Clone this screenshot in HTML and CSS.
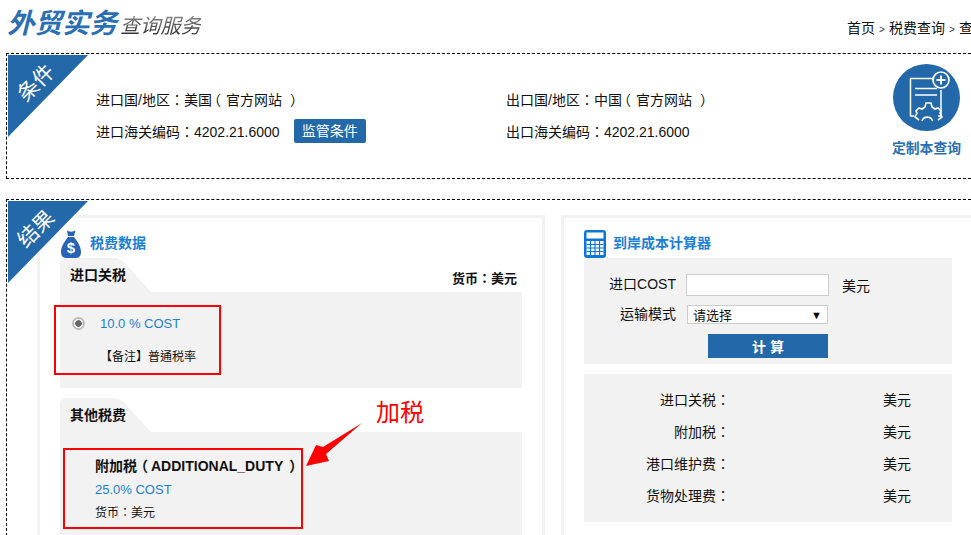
FILE: index.html
```html
<!DOCTYPE html>
<html>
<head>
<meta charset="utf-8">
<title>外贸实务查询服务</title>
<link rel="stylesheet" href="styles.css">
</head>
<body>
<div class="page">
  <header class="top">
    <div class="brand"><span class="brand-main">外贸实务</span><span class="brand-sub">查询服务</span></div>
    <div class="crumbs">首页<i> &gt; </i>税费查询<i> &gt; </i>查询结果</div>
  </header>

  <section class="panel panel-cond">
    <div class="ribbon"><span>条件</span></div>
    <div class="cond-col cond-col-a">
      <p class="cond-row">进口国/地区：美国<span class="po">（</span>官方网站<span class="pc">）</span></p>
      <p class="cond-row">进口海关编码：4202.21.6000<a class="btn-small">监管条件</a></p>
    </div>
    <div class="cond-col cond-col-b">
      <p class="cond-row">出口国/地区：中国<span class="po">（</span>官方网站<span class="pc">）</span></p>
      <p class="cond-row">出口海关编码：4202.21.6000</p>
    </div>
    <div class="custom">
      <svg class="custom-icon" viewBox="0 0 67 67" aria-hidden="true">
        <circle cx="33.500" cy="33.500" r="33.500" fill="#2368a8"/>
        <path d="M41 14.500H17.500V52H21" fill="none" stroke="#fff" stroke-width="1.500"/>
        <path d="M48 26V52H45" fill="none" stroke="#fff" stroke-width="1.500"/>
        <path d="M22 24.500H44M22 31H44" stroke="#fff" stroke-width="1.500"/>
        <circle cx="48" cy="16" r="8" fill="#2368a8" stroke="#fff" stroke-width="1.700"/>
        <path d="M43.500 16H52.500M48 11.500V20.500" stroke="#fff" stroke-width="1.800"/>
        <path d="M26 56 l-4 -3 l2 -4 l-1 -2 l3 -3 l3 1 l3 -2 l1 -4 h5 l1 4 l3 2 l3 -1 l3 3 l-1 2 l2 4 l-4 3" fill="none" stroke="#fff" stroke-width="1.600"/>
        <path d="M29 57a5.500 5.500 0 0 1 10.500 0" fill="none" stroke="#fff" stroke-width="1.600"/>
      </svg>
      <div class="custom-text">定制本查询</div>
    </div>
  </section>

  <section class="panel panel-result">
    <div class="ribbon"><span>结果</span></div>
    <div class="card card-left">
      <h3 class="card-title">
        <svg class="icon-bag" viewBox="0 0 20 28" aria-hidden="true">
          <path d="M6 0.500C8 2 12 2 14.500 0.500L13 6H7Z" fill="#2a62b4"/>
          <path d="M7 7H13C16 11 20 16 20 22C20 26 18 28 15 28H5C2 28 0 26 0 22C0 16 4 11 7 7Z" fill="#2a62b4"/>
          <text x="10" y="23" class="bag-dollar">$</text>
        </svg>
        <span>税费数据</span>
      </h3>
      <div class="tab-head">
        <div class="tab">进口关税</div>
        <div class="tab-note">货币：美元</div>
      </div>
      <div class="tab-body tab-body-a">
        <div class="rate-box">
          <div class="rate-line"><span class="radio"></span><span class="rate">10.0 % COST</span></div>
          <div class="note">【备注】普通税率</div>
        </div>
      </div>
      <div class="tab-head tab-head-b">
        <div class="tab">其他税费</div>
      </div>
      <div class="tab-body tab-body-b">
        <div class="duty-box">
          <div class="duty-name">附加税<span class="duty-po">（</span>ADDITIONAL_DUTY<span class="duty-pc">）</span></div>
          <div class="duty-rate">25.0% COST</div>
          <div class="duty-cur">货币：美元</div>
        </div>
      </div>
      <div class="callout">加税</div>
      <svg class="arrow" viewBox="0 0 60 46" aria-hidden="true">
        <path d="M56 1L20 32L23 39L0 44L10 23L17 25Z" fill="#f00"/>
      </svg>
    </div>

    <div class="card card-right">
      <h3 class="card-title">
        <svg class="icon-calc" viewBox="0 0 22 28" aria-hidden="true">
          <rect width="22" height="28" rx="3" fill="#0a76d8"/>
          <rect x="2.500" y="2.500" width="17" height="6" fill="#fff"/>
          <rect x="2.500" y="11" width="17" height="14" fill="#fff"/>
          <path d="M2.500 14.500H19.500M2.500 18H19.500M2.500 21.500H19.500M6.500 11V25M11 11V25M15.500 11V25" stroke="#0a76d8" stroke-width="1.200" fill="none"/>
        </svg>
        <span>到岸成本计算器</span>
      </h3>
      <div class="calc">
        <div class="calc-row calc-row-a">
          <label class="calc-label">进口COST</label>
          <input class="calc-input" type="text">
          <span class="calc-unit">美元</span>
        </div>
        <div class="calc-row calc-row-b">
          <label class="calc-label">运输模式</label>
          <div class="calc-select"><span>请选择</span><b>▼</b></div>
        </div>
        <button class="calc-btn">计 算</button>
      </div>
      <div class="summary">
        <div class="sum-row"><span class="sum-label">进口关税：</span><span class="sum-unit">美元</span></div>
        <div class="sum-row"><span class="sum-label">附加税：</span><span class="sum-unit">美元</span></div>
        <div class="sum-row"><span class="sum-label">港口维护费：</span><span class="sum-unit">美元</span></div>
        <div class="sum-row"><span class="sum-label">货物处理费：</span><span class="sum-unit">美元</span></div>
      </div>
    </div>
  </section>
</div>
</body>
</html>
```
FILE: styles.css
```css
* { box-sizing: border-box; }
html, body { margin: 0; padding: 0; height: 535px; overflow: hidden; background: #fff; }
body {
  font-family: "Liberation Sans", "Noto Sans CJK TC", sans-serif;
  font-size: 14px;
  color: #111;
}
p, h3 { margin: 0; }
.page { width: 1000px; padding-left: 6px; }

.top { display: flex; height: 53px; }
.brand { width: 841px; flex: none; padding: 5px 0 0 1px; line-height: 38px; white-space: nowrap; }
.brand-main { font-size: 27.500px; font-weight: 700; font-style: italic; color: #2a6fb3; }
.brand-sub {
  font-size: 20.250px; font-style: italic; margin-left: 3px;
  background: linear-gradient(#8a8a8a, #222);
  -webkit-background-clip: text; background-clip: text; color: transparent;
}
.crumbs { flex: none; white-space: pre; font-size: 14px; padding-top: 18px; line-height: 20px; }
.crumbs i { font-style: normal; font-size: 10px; color: #333; padding: 0 1.300px; }

.panel { position: relative; width: 985px; border: 1px dashed #000; display: flex; }
.panel-cond { height: 126px; padding-left: 89px; }
.panel-result { margin-top: 20px; height: 337px; overflow: hidden; padding: 15px 0 0 30px; gap: 16px; }

.ribbon {
  position: absolute; z-index: 2; left: 1px; top: 1px; width: 80px; height: 82px;
  background: #2368a8; clip-path: polygon(0 0, 100% 0, 0 100%);
}
.ribbon span {
  position: absolute; left: 6px; top: 15px; width: 44px;
  color: #fff; font-size: 21px; line-height: 26px; text-align: center; white-space: nowrap;
  transform: rotate(-45deg);
}

.cond-col { padding-top: 33px; }
.cond-col-a { width: 410px; flex: none; }
.cond-col-b { width: 386px; flex: none; }
.cond-row { display: flex; align-items: center; height: 24px; margin-bottom: 8px; white-space: pre; font-size: 14px; }
.po { margin: 0 5px 0 -5px; }
.pc { margin-left: 8px; }
.btn-small {
  display: block; margin-left: 14px; width: 72px; height: 24px; border-radius: 2px;
  background: #2368a8; color: #fff; text-align: center; line-height: 24px; font-size: 14px;
}
.custom { width: 69px; flex: none; padding-top: 10px; display: flex; flex-direction: column; align-items: center; }
.custom-icon { width: 67px; height: 67px; display: block; flex: none; }
.custom-text { margin-top: 9px; color: #2a6fb3; font-weight: 700; font-size: 13.800px; line-height: 18px; white-space: nowrap; }

.card { position: relative; border: 3px solid #f2f2f2; border-bottom: 0; flex: none; }
.card-left { width: 508px; padding: 11px 20px 0 20px; }
.card-right { width: 420px; padding: 11px 0 0 20px; }
.card-title {
  display: flex; align-items: flex-end; height: 29px;
  font-size: 14px; font-weight: 700; color: #1a7fd6; line-height: 16px;
}
.card-title span { padding-bottom: 7px; }
.icon-bag { width: 20px; height: 28px; margin: 0 9px 0 1px; flex: none; }
.bag-dollar { fill: #fff; font-size: 15px; font-weight: 700; text-anchor: middle; font-family: "Liberation Sans", sans-serif; }
.icon-calc { width: 22px; height: 28px; margin-right: 7px; flex: none; }

.tab-head { display: flex; justify-content: space-between; height: 34px; }
.tab-head-b { margin-top: 10px; }
.tab {
  width: 91px; height: 34px; padding: 8px 0 0 10px;
  background: #f2f2f2; font-size: 14px; font-weight: 700; line-height: 18px;
  clip-path: polygon(0 4px, 4px 0, 62% 0, 70% 4px, 100% 100%, 0 100%);
}
.tab-note { font-size: 13px; font-weight: 700; padding: 12px 5px 0 0; line-height: 18px; }
.tab-body { position: relative; background: #f2f2f2; }
.tab-body-a { height: 96px; padding-top: 13px; }
.tab-body-b { height: 103px; padding-top: 16px; }

.rate-box {
  width: 167px; height: 70px; margin-left: -6px;
  border: 2px solid #f00; padding: 5px 0 0 10px;
}
.rate-line { display: flex; align-items: center; height: 22px; }
.radio {
  width: 13px; height: 13px; border-radius: 50%; flex: none;
  background: radial-gradient(circle, #666 0 3px, #eee 3.500px 4.500px, #bbb 5px);
  margin-left: 6px;
}
.rate { margin-left: 15px; color: #1a7fd6; font-size: 13px; }
.note { margin: 14px 0 0 34px; font-size: 12px; line-height: 18px; white-space: nowrap; }

.duty-box {
  width: 240px; height: 81px; margin-left: 3px;
  border: 2px solid #f00; padding: 7px 0 0 30px;
}
.duty-name { display: flex; font-size: 14px; font-weight: 700; line-height: 18px; white-space: nowrap; }
.duty-po { margin: 0 3px 0 -3px; }
.duty-pc { margin-left: 6px; }
.duty-rate { margin-top: 6px; color: #1a7fd6; font-size: 13px; line-height: 18px; }
.duty-cur { margin-top: 5px; font-size: 12px; line-height: 18px; }

.callout { position: absolute; left: 336px; top: 178px; color: #f00; font-size: 24px; line-height: 34px; white-space: nowrap; }
.arrow { position: absolute; left: 266px; top: 204px; width: 60px; height: 46px; }

.calc { width: 368px; height: 106px; background: #f2f2f2; padding-top: 16px; }
.calc-row { display: flex; align-items: center; }
.calc-row-a { height: 22px; }
.calc-row-b { height: 19px; margin-top: 9px; }
.calc-label { width: 92px; text-align: right; flex: none; white-space: nowrap; line-height: 18px; margin-top: -2px; }
.calc-input { width: 143px; height: 22px; margin: 0 0 0 10px; padding: 0; border: 1px solid #ccc; background: #fff; outline: 0; }
.calc-unit { margin-left: 13px; }
.calc-select {
  width: 141px; height: 19px; margin-left: 11px; padding: 0 5px;
  display: flex; justify-content: space-between; align-items: center;
  border: 1px solid #ccc; background: #fff; font-size: 13px;
}
.calc-select b { font-size: 11px; font-weight: 400; color: #000; }
.calc-btn {
  display: block; width: 120px; height: 24px; margin: 10px 0 0 124px; padding: 0; border: 0;
  background: #2368a8; color: #fff; font: 700 14px "Liberation Sans", "Noto Sans CJK TC", sans-serif;
}
.summary { width: 368px; height: 148px; margin-top: 10px; background: #f2f2f2; padding-top: 9px; }
.sum-row { display: flex; height: 32px; align-items: center; }
.sum-label { width: 146px; text-align: right; flex: none; font-size: 14px; }
.sum-unit { margin-left: 153px; font-size: 14px; }
```
